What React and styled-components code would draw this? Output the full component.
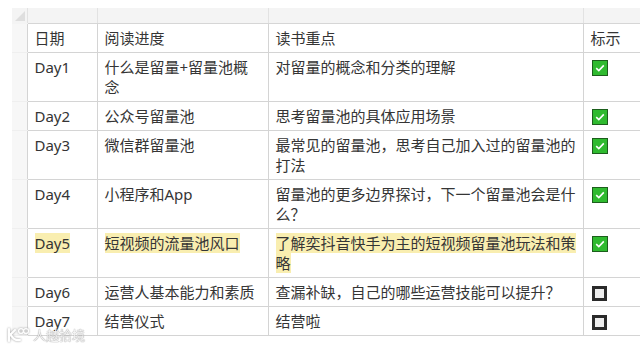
import React from "react";
import styled, { createGlobalStyle } from "styled-components";

const GlobalStyle = createGlobalStyle`
  html, body {
    margin: 0;
    padding: 0;
    background: #ffffff;
  }
`;

const rows = [
  { day: "Day1", progress: "什么是留量+留量池概念", focus: "对留量的概念和分类的理解", done: true },
  { day: "Day2", progress: "公众号留量池", focus: "思考留量池的具体应用场景", done: true },
  { day: "Day3", progress: "微信群留量池", focus: "最常见的留量池，思考自己加入过的留量池的打法", done: true },
  { day: "Day4", progress: "小程序和App", focus: "留量池的更多边界探讨，下一个留量池会是什么？", done: true },
  { day: "Day5", progress: "短视频的流量池风口", focus: "了解奕抖音快手为主的短视频留量池玩法和策略", done: true, mark: true },
  { day: "Day6", progress: "运营人基本能力和素质", focus: "查漏补缺，自己的哪些运营技能可以提升？", done: false },
  { day: "Day7", progress: "结营仪式", focus: "结营啦", done: false },
];

export default function App() {
  return (
    <>
      <GlobalStyle />
      <Sheet>
        <Grid>
          <colgroup>
            <col style={{ width: 15 }} />
            <col style={{ width: 70 }} />
            <col style={{ width: 171 }} />
            <col style={{ width: 315 }} />
            <col style={{ width: 80 }} />
          </colgroup>
          <thead>
            <tr>
              <Corner>
                <Triangle />
              </Corner>
              <ColHead />
              <ColHead />
              <ColHead />
              <ColHead />
            </tr>
          </thead>
          <tbody>
            <tr>
              <RowHead />
              <Cell>日期</Cell>
              <Cell>阅读进度</Cell>
              <Cell>读书重点</Cell>
              <Cell>标示</Cell>
            </tr>
            {rows.map((r) => (
              <tr key={r.day}>
                <RowHead />
                <Cell>{r.mark ? <Mark>{r.day}</Mark> : r.day}</Cell>
                <Cell>{r.mark ? <Mark>{r.progress}</Mark> : r.progress}</Cell>
                <Cell>{r.mark ? <Mark>{r.focus}</Mark> : r.focus}</Cell>
                <Cell>
                  <Box $checked={r.done}>
                    {r.done ? (
                      <svg width="10" height="8" viewBox="0 0 10 8">
                        <path d="M1.2 4.2 L3.8 6.6 L8.8 1.4" fill="none" stroke="#ffffff" strokeWidth="1.6" />
                      </svg>
                    ) : null}
                  </Box>
                </Cell>
              </tr>
            ))}
          </tbody>
        </Grid>
        <Watermark>
          <LogoMark>
            <svg width="24" height="16" viewBox="0 0 24 16">
              <path d="M3 2 L3 14 M3 9 L9 3 M5 8 Q8 14 14 13" fill="none" stroke="#ffffff" strokeWidth="2.2" strokeLinecap="round" />
              <circle cx="15" cy="4" r="2.4" fill="none" stroke="#ffffff" strokeWidth="1.4" />
              <circle cx="20" cy="4" r="2.4" fill="none" stroke="#ffffff" strokeWidth="1.4" />
            </svg>
          </LogoMark>
          <span>人越拾境</span>
        </Watermark>
      </Sheet>
    </>
  );
}

const Sheet = styled.div`
  position: relative;
  width: 640px;
  height: 347px;
  overflow: hidden;
  box-sizing: border-box;
  padding: 8px 0 0 12px;
  background: #ffffff;
  font-family: "Noto Sans", "Noto Sans CJK SC", sans-serif;
`;

const Grid = styled.table`
  border-collapse: collapse;
  table-layout: fixed;
  width: 651px;
`;

const ColHead = styled.th`
  height: 15px;
  padding: 0;
  background: #f4f4f4;
  border-left: 1px solid #e2e2e2;
  border-bottom: 1px solid #d6d6d6;
`;

const Corner = styled.th`
  position: relative;
  height: 15px;
  padding: 0;
  background: #f4f4f4;
  border-bottom: 1px solid #f4f4f4;
`;

const Triangle = styled.span`
  position: absolute;
  left: 3px;
  bottom: 2px;
  width: 0;
  height: 0;
  border-left: 10px solid transparent;
  border-bottom: 10px solid #dedede;
`;

const RowHead = styled.td`
  padding: 0;
  background: #f7f7f7;
  border-bottom: 1px solid #efefef;
`;

const Cell = styled.td`
  padding: 4px 7px;
  vertical-align: top;
  border: 1px solid #d4d4d4;
  font-size: 15px;
  line-height: 20px;
  color: #353535;
  word-break: break-all;
`;

const Mark = styled.span`
  background: #f9eeb0;
`;

const Box = styled.span`
  display: flex;
  align-items: center;
  justify-content: center;
  box-sizing: border-box;
  margin: ${(p) => (p.$checked ? "3px 0 1px 1px" : "4px 0 1px 1px")};
  width: ${(p) => (p.$checked ? "16px" : "15px")};
  height: ${(p) => (p.$checked ? "16px" : "15px")};
  background: ${(p) => (p.$checked ? "#2fba2f" : "#ededed")};
  border: ${(p) => (p.$checked ? "1px solid #1c5e1c" : "3px solid #2a2a2a")};
`;

const Watermark = styled.div`
  position: absolute;
  left: 6px;
  bottom: 3px;
  display: flex;
  align-items: center;
  gap: 3px;
  font-size: 13px;
  color: rgba(255, 255, 255, 0.9);
  text-shadow: 0 0 1px #888, 0 0 1px #888;
  opacity: 0.85;
`;

const LogoMark = styled.span`
  display: flex;
  filter: drop-shadow(0 0 1px #888);
`;
